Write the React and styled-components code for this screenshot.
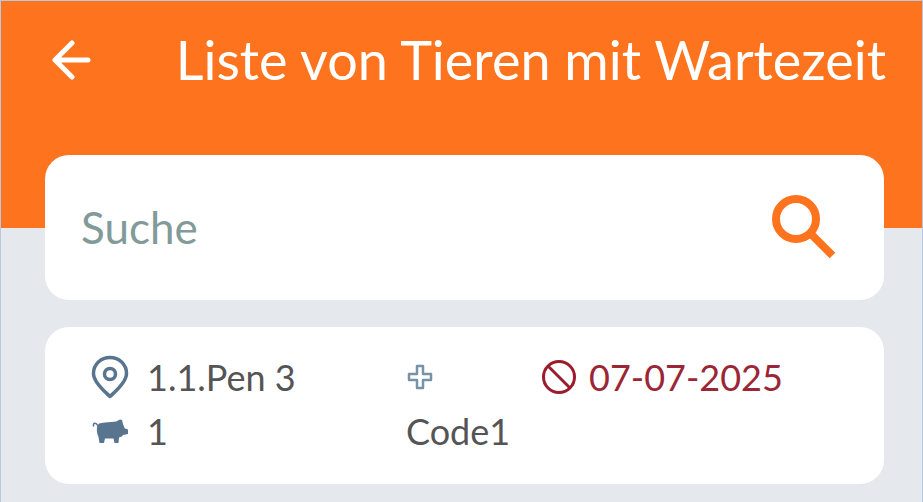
import React from 'react';
import styled, { createGlobalStyle } from 'styled-components';

const animals = [
  { id: 1, pen: '1.1.Pen 3', count: 1, code: 'Code1', date: '07-07-2025' },
];

const App = () => {
  return (
    <>
      <GlobalStyle />
      <Page>
        <Header>
          <BackButton type="button" aria-label="Zurück">
            <svg width="40" height="40" viewBox="0 0 40 40">
              <path d="M21 3 L4 20 L21 37 M4 20 H37" />
            </svg>
          </BackButton>
          <Title>Liste von Tieren mit Wartezeit</Title>
        </Header>
        <Main>
          <SearchForm role="search" onSubmit={(e) => e.preventDefault()}>
            <SearchInput type="text" placeholder="Suche" aria-label="Suche" />
            <SearchButton type="submit" aria-label="Suchen">
              <svg width="64" height="64" viewBox="0 0 64 64">
                <circle cx="24" cy="24" r="20" />
                <path d="M40 40 L60.500 60.500" />
              </svg>
            </SearchButton>
          </SearchForm>
          <List>
            {animals.map((animal) => (
              <AnimalCard key={animal.id}>
                <Cell>
                  <PinIcon />
                  {animal.pen}
                </Cell>
                <Cell>
                  <CrossIcon />
                </Cell>
                <Cell $danger>
                  <BanIcon />
                  {animal.date}
                </Cell>
                <Cell>
                  <PigIcon />
                  {animal.count}
                </Cell>
                <Cell>{animal.code}</Cell>
              </AnimalCard>
            ))}
          </List>
        </Main>
      </Page>
    </>
  );
};

const PinIcon = () => (
  <svg width="38" height="44" viewBox="0 0 38 44" fill="none" stroke="#58748f">
    <path
      d="M19 41.500 C15 37.500 2.500 28 2.500 18.500 C2.500 9 10 2.500 19 2.500 C28 2.500 35.500 9 35.500 18.500 C35.500 28 23 37.500 19 41.500 Z"
      strokeWidth="3.500"
      strokeLinejoin="round"
    />
    <circle cx="19" cy="19" r="5.500" strokeWidth="3.500" />
  </svg>
);

const PigIcon = () => (
  <svg width="38" height="26" viewBox="0 0 38 26" fill="#58748f">
    <path d="M8 5.500 C13 4 20 4.500 25 3.500 L29 1.500 L31 2 L32 6 C33 8 33 9.500 34 10.500 L37 11.500 V16 L32 17 C31 18.500 30 19 28 19.500 L27.500 25 H23.500 L22.500 20.500 H14 L13 25 H8.500 L7.500 19 C5.500 15 5 8 8 5.500 Z" />
    <path
      d="M7 8 C5 4 2 4.500 2.500 8"
      fill="none"
      stroke="#58748f"
      strokeWidth="1.500"
      strokeLinecap="round"
    />
  </svg>
);

const CrossIcon = () => (
  <svg width="28" height="28" viewBox="0 0 28 28" fill="none">
    <path
      d="M11 3 H17 V11 H25 V17 H17 V25 H11 V17 H3 V11 H11 Z"
      stroke="#7892a8"
      strokeWidth="2.500"
      strokeLinejoin="round"
    />
  </svg>
);

const BanIcon = () => (
  <svg width="36" height="36" viewBox="0 0 36 36" fill="none">
    <g stroke="#9b1c2c" strokeWidth="3">
      <circle cx="18" cy="18" r="15.500" />
      <path d="M7 7 L29 29" />
    </g>
  </svg>
);

const GlobalStyle = createGlobalStyle`
  * {
    box-sizing: border-box;
  }

  body {
    margin: 0;
    font-family: Lato, 'Liberation Sans', sans-serif;
  }
`;

const Page = styled.div`
  min-height: 100vh;
  background: #e5e8ed;
  border: 1px solid #b7c8e0;
  border-bottom: 0;
`;

const Header = styled.header`
  display: flex;
  align-items: center;
  justify-content: space-between;
  background: #fe731d;
  padding: 23px 36px 132px 50px;
`;

const BackButton = styled.button`
  display: flex;
  padding: 0;
  border: 0;
  background: none;
  cursor: pointer;

  svg {
    fill: none;
    stroke: #fff;
    stroke-width: 5;
    stroke-linecap: round;
    stroke-linejoin: round;
  }
`;

const Title = styled.h1`
  margin: 0;
  color: #fff;
  font-size: 54px;
  font-weight: 400;
  line-height: 72px;
`;

const Main = styled.main`
  display: grid;
  gap: 27px;
  margin-top: -73px;
  padding: 0 38px 18px 44px;
`;

const SearchForm = styled.form`
  display: flex;
  align-items: center;
  padding: 40px 48px 41px 36px;
  border-radius: 24px;
  background: #fff;
`;

const SearchInput = styled.input`
  flex: 1;
  min-width: 0;
  padding: 0;
  border: 0;
  outline: 0;
  background: none;
  color: #555;
  font-family: inherit;
  font-size: 44px;
  line-height: 64px;

  &::placeholder {
    color: #829a9a;
    opacity: 1;
  }
`;

const SearchButton = styled.button`
  display: flex;
  padding: 0;
  border: 0;
  background: none;
  cursor: pointer;

  svg {
    fill: none;
    stroke: #fe731d;
    stroke-width: 8;
  }
`;

const List = styled.ul`
  display: grid;
  gap: 27px;
  margin: 0;
  padding: 0;
  list-style: none;
`;

const AnimalCard = styled.li`
  display: grid;
  grid-template-columns: 35fr 15fr 33fr;
  padding: 23px 46px 26px;
  border-radius: 24px;
  background: #fff;
`;

const Cell = styled.div`
  display: flex;
  align-items: center;
  gap: ${(props) => (props.$danger ? '12px' : '18px')};
  color: ${(props) => (props.$danger ? '#9b2635' : '#555')};
  font-size: 36px;
  line-height: 54px;
  white-space: nowrap;
`;

export default App;
